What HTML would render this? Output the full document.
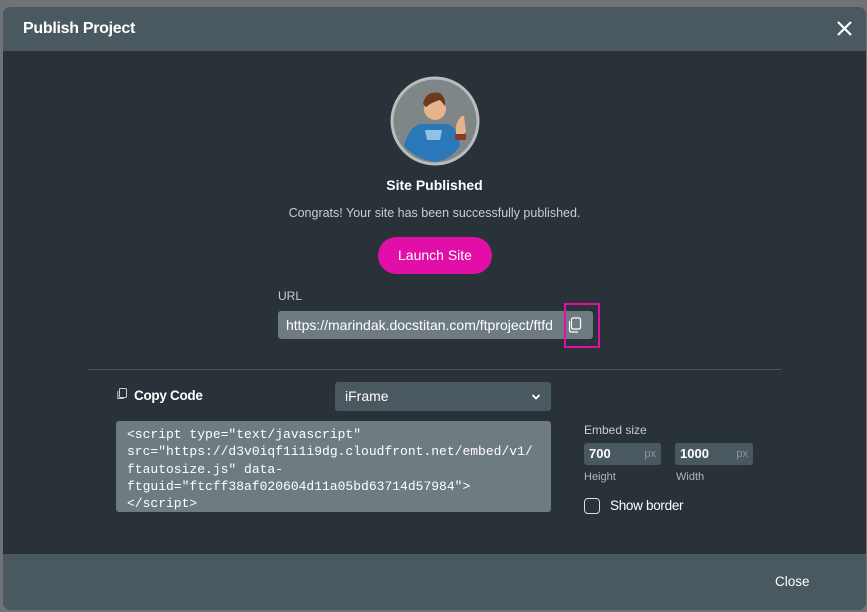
<!DOCTYPE html>
<html><head><style>
*{margin:0;padding:0;box-sizing:border-box}
body{width:867px;height:612px;background:#6f7376;position:relative;overflow:hidden;font-family:"Liberation Sans",sans-serif;color:#fff}
.modal{position:absolute;left:3px;top:7px;width:863px;height:603px;background:#283238;border-radius:8px;overflow:hidden}
.hdr{position:absolute;left:0;top:0;width:100%;height:44px;background:#4a585f}
.ftr{position:absolute;left:0;top:547px;width:100%;height:56px;background:#4a585f}
.abs{position:absolute}
</style></head><body>
<div class="modal">
 <div class="hdr">
  <div class="abs" style="left:20px;top:13px;font-size:16px;font-weight:bold;letter-spacing:-0.3px">Publish Project</div>
  <svg class="abs" style="left:833px;top:13px" width="17" height="17" viewBox="0 0 17 17"><path d="M2 2L15 15M15 2L2 15" stroke="#fff" stroke-width="2.2"/></svg>
 </div>
 <svg class="abs" style="left:387px;top:69px" width="90" height="90" viewBox="0 0 90 90">
  <circle cx="45" cy="45" r="43" fill="#7e8688" stroke="#b9bdbe" stroke-width="3"/>
  <path d="M14 70 Q18 52 30 48 L58 48 Q68 52 70 70 Q60 84 45 86 Q28 84 14 70Z" fill="#2a78b8"/>
  <path d="M35 54 L52 54 L50 64 L37 64Z" fill="#8fc3e6"/>
  <circle cx="45" cy="33" r="11" fill="#e7b38d"/>
  <path d="M33 28 Q36 14 50 17 Q56 22 55 30 L50 24 Q42 26 36 31Z" fill="#6b3a1f"/>
  <path d="M66 50 Q70 38 74 40 L76 56 Q70 62 66 58Z" fill="#e7b38d"/>
  <rect x="65" y="58" width="11" height="6" fill="#8a3a2a"/>
 </svg>
 <div class="abs" style="left:0;width:863px;top:170px;text-align:center;font-size:14px;font-weight:bold">Site Published</div>
 <div class="abs" style="left:0;width:863px;top:199px;text-align:center;font-size:12.5px;color:#c8cdd0">Congrats! Your site has been successfully published.</div>
 <div class="abs" style="left:375px;top:230px;width:114px;height:37px;border-radius:19px;background:#e10fa8;text-align:center;line-height:37px;font-size:14px">Launch Site</div>
 <div class="abs" style="left:275px;top:282px;font-size:12px;color:#c8cdd0">URL</div>
 <div class="abs" style="left:275px;top:304px;width:315px;height:28px;border-radius:3px;background:#6e7b80;font-size:14px;line-height:28px;padding-left:8px;color:#fff;white-space:nowrap;overflow:hidden">https://marindak.docstitan.com/ftproject/ftfd</div>
 <div class="abs" style="left:561px;top:296px;width:36px;height:45px;border:2px solid #e10fa8"></div>
 <svg class="abs" style="left:565px;top:310px" width="14" height="16" viewBox="0 0 14 16"><rect x="3.5" y="1" width="9" height="11" rx="1.5" fill="none" stroke="#fff" stroke-width="1.2"/><path d="M1.5 4v9.5a1.5 1.5 0 0 0 1.5 1.5h7" fill="none" stroke="#fff" stroke-width="1.2"/></svg>
 <div class="abs" style="left:85px;top:362px;width:693px;height:1px;background:#4a5459"></div>
 <svg class="abs" style="left:114px;top:381px" width="10" height="12" viewBox="0 0 10 12"><rect x="2.5" y="0.5" width="7" height="9" rx="1" fill="none" stroke="#ccc"/><path d="M0.8 3v7.5h6" fill="none" stroke="#ccc"/></svg>
 <div class="abs" style="left:131px;top:381px;font-size:13.5px;font-weight:bold;letter-spacing:-0.3px">Copy Code</div>
 <div class="abs" style="left:332px;top:375px;width:216px;height:29px;border-radius:3px;background:#4a585f;font-size:14px;line-height:29px;padding-left:10px">iFrame</div>
 <svg class="abs" style="left:528px;top:386px" width="10" height="8" viewBox="0 0 10 8"><path d="M1.5 2L5 5.5 8.5 2" stroke="#fff" stroke-width="1.8" fill="none"/></svg>
 <div class="abs" style="left:113px;top:414px;width:435px;height:91px;border-radius:3px;background:#6e7b80;font-family:'Liberation Mono',monospace;font-size:13px;line-height:17.3px;padding:5px 11px;white-space:pre;overflow:hidden">&lt;script type="text/javascript"
src="https://d3v0iqf1i1i9dg.cloudfront.net/embed/v1/
ftautosize.js" data-
ftguid="ftcff38af020604d11a05bd63714d57984"&gt;
&lt;/script&gt;</div>
 <div class="abs" style="left:581px;top:416px;font-size:12px;color:#c8cdd0">Embed size</div>
 <div class="abs" style="left:581px;top:436px;width:77px;height:22px;border-radius:3px;background:#4a585f;font-size:13px;font-weight:bold;line-height:22px;padding-left:5px">700<span style="position:absolute;right:5px;font-size:11px;font-weight:normal;color:#8a969b">px</span></div>
 <div class="abs" style="left:672px;top:436px;width:78px;height:22px;border-radius:3px;background:#4a585f;font-size:13px;font-weight:bold;line-height:22px;padding-left:5px">1000<span style="position:absolute;right:5px;font-size:11px;font-weight:normal;color:#8a969b">px</span></div>
 <div class="abs" style="left:581px;top:464px;font-size:11px;color:#b0b7ba">Height</div>
 <div class="abs" style="left:673px;top:464px;font-size:11px;color:#b0b7ba">Width</div>
 <div class="abs" style="left:581px;top:491px;width:16px;height:16px;border:1.5px solid #ddd;border-radius:4px"></div>
 <div class="abs" style="left:607px;top:491px;font-size:13.5px;letter-spacing:-0.3px">Show border</div>
 <div class="ftr"><div class="abs" style="left:772px;top:20px;font-size:13.5px">Close</div></div>
</div>
</body></html>
